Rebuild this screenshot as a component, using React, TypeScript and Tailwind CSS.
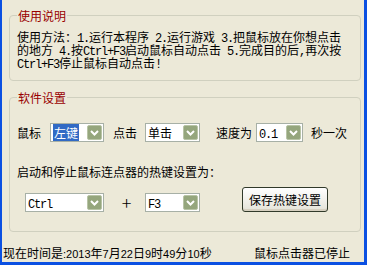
import React from 'react'

// SimSun-like latin: 6px per char, spaces kept
function M({ children }: { children: React.ReactNode }) {
  return <span className="font-['Liberation_Mono',monospace] tracking-[-1.2px] leading-[9px] whitespace-pre">{children}</span>
}

// Tahoma-like digits for the status bar
function D({ children }: { children: React.ReactNode }) {
  return <span className="font-['Liberation_Sans',sans-serif] text-[11px] leading-[9px]">{children}</span>
}

function Chevron() {
  return (
    <svg width="9" height="6" viewBox="0 0 9 6">
      <path d="M1 1 L4.5 4.5 L8 1" fill="none" stroke="white" strokeWidth="2" />
    </svg>
  )
}

function Combo({ className, children }: { className: string; children: React.ReactNode }) {
  return (
    <div className={`flex h-[19px] items-center border border-[#A7B0A6] bg-white ${className}`}>
      <div className="h-[13px] flex-1 pl-[2px] leading-[13px] whitespace-nowrap">{children}</div>
      <div className="m-[1px] flex h-[15px] w-[15px] items-center justify-center rounded-[2px] border border-[#B8C4A6] bg-[#95A67D]">
        <Chevron />
      </div>
    </div>
  )
}

function Line({ children }: { children: React.ReactNode }) {
  return <div className="h-[13px] whitespace-nowrap">{children}</div>
}

export default function App() {
  return (
    <div className="flex h-[265px] w-[367px] flex-col bg-[#0B50E2] pr-[3px] pb-[3px] pl-[2px] text-[12px] leading-[13px] text-black font-['Noto_Sans_CJK_SC',sans-serif]">
      <div className="flex h-[262px] flex-col overflow-hidden bg-[#ECE9D8] pt-[9px]">
        {/* 使用说明 */}
        <fieldset className="ml-[7px] w-[352px] rounded-[4px] border border-[#D0D0BF] pr-[4px] pb-[11px] pl-[7px]">
          <legend className="h-[13px] px-[1px] text-[#990000]">使用说明</legend>
          <div className="pt-[8px]">
            <Line>
              使用方法：<M>1.</M>运行本程序<M> 2.</M>运行游戏<M> 3.</M>把鼠标放在你想点击
            </Line>
            <Line>
              的地方<M> 4.</M>按<M>Ctrl+F3</M>启动鼠标自动点击<M> 5.</M>完成目的后<M>,</M>再次按
            </Line>
            <Line>
              <M>Ctrl+F3</M>停止鼠标自动点击<M>!</M>
            </Line>
          </div>
        </fieldset>

        {/* 软件设置 */}
        <fieldset className="mt-[10px] ml-[7px] w-[352px] rounded-[4px] border border-[#D0D0BF] pr-[4px] pb-[19px] pl-[7px]">
          <legend className="h-[13px] px-[1px] text-[#990000]">软件设置</legend>
          <div className="flex items-center pt-[19px]">
            <span>鼠标</span>
            <Combo className="ml-[9px] w-[54px]">
              <span className="bg-[#316AC5] px-[1px] text-white">左键</span>
            </Combo>
            <span className="ml-[9px]">点击</span>
            <Combo className="ml-[8px] w-[55px]">单击</Combo>
            <span className="ml-[16px]">速度为</span>
            <Combo className="ml-[4px] w-[47px]">
              <M>0.1</M>
            </Combo>
            <span className="ml-[8px]">秒一次</span>
          </div>
          <div className="mt-[23px] h-[13px]">启动和停止鼠标连点器的热键设置为：</div>
          <div className="mt-[9px] flex items-end">
            <Combo className="ml-[8px] w-[79px]">
              <M>Ctrl</M>
            </Combo>
            <span className="mb-[1px] ml-[15px] w-[15px] text-center text-[18px] leading-[18px] font-light">+</span>
            <Combo className="ml-[11px] w-[55px]">
              <M>F3</M>
            </Combo>
            <button className="ml-[42px] h-[25px] w-[86px] rounded-[3px] border border-[#313A2A] bg-linear-to-b from-white to-[#E4E3D8] leading-[13px] shadow-[inset_0_-2px_0_#D6D0C0]">
              保存热键设置
            </button>
          </div>
        </fieldset>

        <div className="mt-[14px] flex h-[13px] justify-between pr-[14px] pl-[1px]">
          <span className="whitespace-nowrap">
            现在时间是<D>:2013</D>年<D>7</D>月<D>22</D>日<D>9</D>时<D>49</D>分<D>10</D>秒
          </span>
          <span>鼠标点击器已停止</span>
        </div>
      </div>
    </div>
  )
}
